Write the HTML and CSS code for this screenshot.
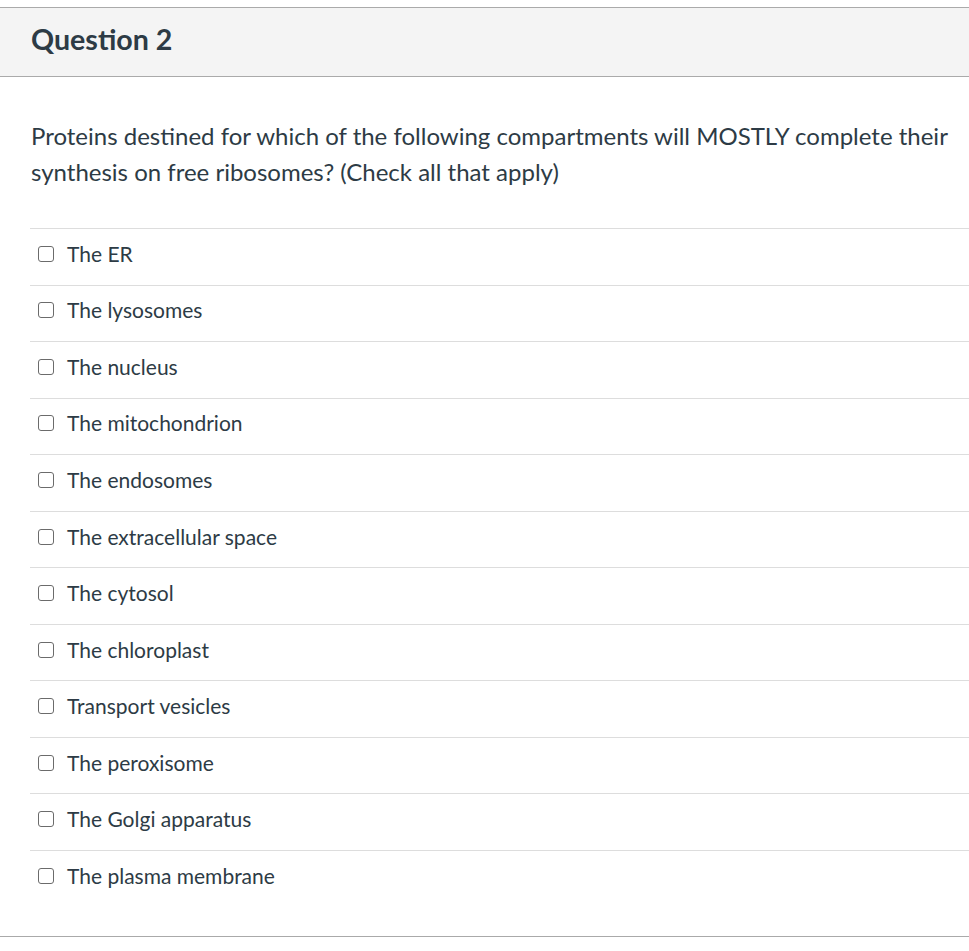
FILE: index.html
```html
<!DOCTYPE html>
<html>
<head>
<meta charset="utf-8">
<link rel="stylesheet" href="styles.css">
</head>
<body>
<div class="question">
  <div class="header"><h2 class="title">Question 2</h2></div>
  <div class="text">
    <p class="prompt">Proteins destined for which of the following compartments will MOSTLY complete their synthesis on free ribosomes? (Check all that apply)</p>
    <div class="answers">
      <label class="answer"><span class="box"></span><span class="label">The ER</span></label>
      <label class="answer"><span class="box"></span><span class="label">The lysosomes</span></label>
      <label class="answer"><span class="box"></span><span class="label">The nucleus</span></label>
      <label class="answer"><span class="box"></span><span class="label">The mitochondrion</span></label>
      <label class="answer"><span class="box"></span><span class="label">The endosomes</span></label>
      <label class="answer"><span class="box"></span><span class="label">The extracellular space</span></label>
      <label class="answer"><span class="box"></span><span class="label">The cytosol</span></label>
      <label class="answer"><span class="box"></span><span class="label">The chloroplast</span></label>
      <label class="answer"><span class="box"></span><span class="label">Transport vesicles</span></label>
      <label class="answer"><span class="box"></span><span class="label">The peroxisome</span></label>
      <label class="answer"><span class="box"></span><span class="label">The Golgi apparatus</span></label>
      <label class="answer"><span class="box"></span><span class="label">The plasma membrane</span></label>
    </div>
  </div>
</div>
</body>
</html>
```
FILE: styles.css
```css
html, body {
  margin: 0;
  padding: 0;
  background: #fff;
}
body {
  font-family: Lato, "Noto Sans", sans-serif;
  color: #2d3b45;
  padding-top: 7px;
}
.question {
  border-top: 1px solid #aaaaaa;
  border-bottom: 1px solid #aaaaaa;
  width: 1000px;
}
.header {
  background: #f4f4f4;
  border-bottom: 1px solid #aaaaaa;
  height: 68px;
  display: flex;
  align-items: center;
  padding-left: 31px;
}
.title {
  margin: 0;
  font-size: 28.6px;
  font-weight: 700;
  line-height: 1;
  color: #2d3b45;
  padding-bottom: 6px;
}
.text {
  padding: 41px 0 29px 30px;
}
.prompt {
  margin: 0 0 38px 1px;
  font-size: 24px;
  line-height: 36px;
  width: 935px;
}
.answers {
  display: flex;
  flex-direction: column;
}
.answer {
  display: flex;
  align-items: center;
  height: 56.55px;
  box-sizing: border-box;
  border-top: 1px solid #dddddd;
  padding-left: 8px;
  padding-bottom: 6px;
  font-size: 21px;
}
.box {
  width: 14px;
  height: 14px;
  border: 1.5px solid #6b6b6b;
  border-radius: 3px;
  background: #fff;
  flex: none;
  margin-right: 13px;
}
.label {
  line-height: 24px;
}
```
